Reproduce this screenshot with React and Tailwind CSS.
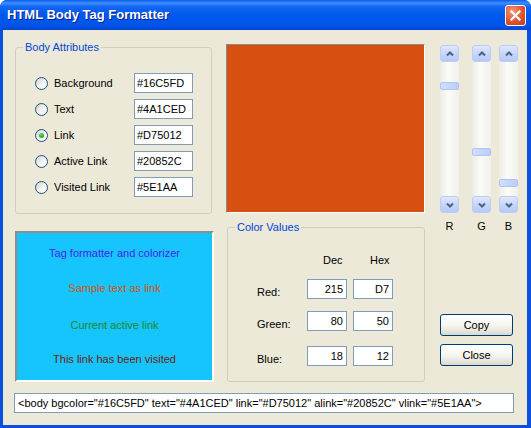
import React from 'react';

const attrs = [
  { label: 'Background', value: '#16C5FD' },
  { label: 'Text', value: '#4A1CED' },
  { label: 'Link', value: '#D75012', checked: true },
  { label: 'Active Link', value: '#20852C' },
  { label: 'Visited Link', value: '#5E1AA' },
];

const channels = [
  { name: 'Red:', dec: 215, hex: 'D7' },
  { name: 'Green:', dec: 80, hex: '50' },
  { name: 'Blue:', dec: 18, hex: '12' },
];

const Radio = ({ checked }) => (
  <div className="w-[13px] h-[13px] rounded-full border border-[#1C5180] bg-[linear-gradient(135deg,#D4D2C8,#F4F4F0_55%,#FFFFFF)] flex items-center justify-center shrink-0">
    {checked && (
      <div className="w-[5px] h-[5px] rounded-full bg-[radial-gradient(circle_at_40%_35%,#6EDB6E,#21A121_70%)]" />
    )}
  </div>
);

const ScrollBtn = ({ down }) => (
  <div className="h-[17px] w-full rounded-[3px] border border-[#BBCDF5] bg-[linear-gradient(to_bottom,#DFE8FD,#C6D6FC_50%,#B6CAF7)] flex items-center justify-center shrink-0">
    <svg width="8" height="6" viewBox="0 0 8 6">
      <polyline
        points={down ? '1,1.5 4,4.5 7,1.5' : '1,4.5 4,1.5 7,4.5'}
        fill="none"
        stroke="#4D6185"
        strokeWidth="2"
      />
    </svg>
  </div>
);

const Scroll = ({ value }) => {
  // thumb goes down as the value drops
  const top = Math.round(((255 - value) / 255) * 126);
  return (
    <div className="w-[19px] h-[168px] flex flex-col bg-[linear-gradient(to_right,#EDECE4,#FBFBF8_45%,#F1F0EA)]">
      <ScrollBtn />
      <div className="relative flex-1">
        <div
          className="absolute left-0 right-0 h-[8px] rounded-[2px] border border-[#B1C4F1] bg-[linear-gradient(to_right,#D2DEFD,#BBCEF8)]"
          style={{ top }}
        />
      </div>
      <ScrollBtn down />
    </div>
  );
};

const XpButton = ({ children, className = '' }) => (
  <div className={`w-[73px] h-[22px] rounded-[3px] border border-[#003C74] bg-[linear-gradient(to_bottom,#FFFFFF,#F4F4F0_55%,#DCD8CC)] flex items-center justify-center text-black ${className}`}>
    {children}
  </div>
);

const App = () => {
  return (
    <div className="w-[531px] h-[428px] flex flex-col bg-[#0A4FDD] rounded-t-[7px] overflow-hidden font-['Liberation_Sans',Arial,sans-serif] text-[11px] leading-[13px] text-black">
      {/* Title bar */}
      <div className="h-[30px] shrink-0 flex items-center justify-between pl-[7px] pr-[5px] bg-[linear-gradient(to_bottom,#0A5BEF_0%,#3D8FFB_10%,#1266F3_22%,#0058EE_50%,#0055E8_85%,#0046D3_100%)]">
        <span className="text-white font-bold text-[13px] leading-[16px] [text-shadow:1px_1px_0_#0A1E8C]">
          HTML Body Tag Formatter
        </span>
        <div className="w-[21px] h-[21px] rounded-[3px] border border-white bg-[radial-gradient(circle_at_35%_30%,#F29A7C,#E0532F_55%,#C5391A)] flex items-center justify-center">
          <svg width="11" height="11" viewBox="0 0 11 11">
            <path d="M1.5 1.5 L9.5 9.5 M9.5 1.5 L1.5 9.5" stroke="white" strokeWidth="2.2" strokeLinecap="square" />
          </svg>
        </div>
      </div>

      {/* Body */}
      <div className="flex-1 ml-[3px] mr-[4px] mb-[3px] bg-[#ECE9D8] flex flex-col">
        <div className="flex pl-[12px]">
          {/* Left column */}
          <div className="w-[199px] flex flex-col mt-[17px]">
            <div className="relative w-[197px] h-[167px] rounded-[3px] border border-[#D0D0BF] pt-[25px] pl-[19px]">
              <span className="absolute -top-[7px] left-[7px] px-[2px] bg-[#ECE9D8] text-[#0046D5]">
                Body Attributes
              </span>
              <div className="flex flex-col gap-[6px]">
                {attrs.map((a) => (
                  <div key={a.label} className="flex items-center h-[20px]">
                    <div className="w-[99px] flex items-center gap-[6px]">
                      <Radio checked={a.checked} />
                      <span>{a.label}</span>
                    </div>
                    <div className="w-[59px] h-[20px] border border-[#7F9DB9] bg-white px-[2px] flex items-center">
                      {a.value}
                    </div>
                  </div>
                ))}
              </div>
            </div>

            <div className="mt-[17px] w-[199px] h-[151px] border-2 border-t-[#8E8E8E] border-l-[#8E8E8E] border-b-white border-r-white bg-[#16C5FD] flex flex-col items-center pt-[14px]">
              <span className="text-[#4A1CED]">Tag formatter and colorizer</span>
              <span className="mt-[22px] text-[#D75012]">Sample text as link</span>
              <span className="mt-[24px] text-[#20852C]">Current active link</span>
              <span className="mt-[21px] text-[#701A0C]">This link has been visited</span>
            </div>
          </div>

          {/* Middle column */}
          <div className="w-[199px] ml-[12px] flex flex-col mt-[14px]">
            <div className="w-[199px] h-[169px] border border-t-[#8A8A8A] border-l-[#8A8A8A] border-b-white border-r-white bg-[#D75012]" />

            <div className="relative ml-[1px] mt-[14px] w-[198px] h-[155px] rounded-[3px] border border-[#D0D0BF] pt-[26px]">
              <span className="absolute -top-[7px] left-[7px] px-[2px] bg-[#ECE9D8] text-[#0046D5]">
                Color Values
              </span>
              <div className="flex pl-[95px]">
                <span className="w-[47px]">Dec</span>
                <span>Hex</span>
              </div>
              <div className="flex flex-col pl-[29px] mt-[12px]">
                {channels.map((c, i) => (
                  <div key={c.name} className={`flex items-start ${i === 1 ? 'mt-[12px]' : i === 2 ? 'mt-[15px]' : ''}`}>
                    <span className="w-[50px] mt-[7px]">{c.name}</span>
                    <div className="w-[40px] h-[20px] border border-[#7F9DB9] bg-white pr-[3px] flex items-center justify-end">
                      {c.dec}
                    </div>
                    <div className="ml-[6px] w-[40px] h-[20px] border border-[#7F9DB9] bg-white pr-[3px] flex items-center justify-end">
                      {c.hex}
                    </div>
                  </div>
                ))}
              </div>
            </div>
          </div>

          {/* Right column */}
          <div className="ml-[15px] flex flex-col mt-[15px]">
            <div className="flex">
              <div className="flex flex-col items-center">
                <Scroll value={215} />
                <span className="mt-[7px]">R</span>
              </div>
              <div className="flex flex-col items-center ml-[13px]">
                <Scroll value={80} />
                <span className="mt-[7px]">G</span>
              </div>
              <div className="flex flex-col items-center ml-[8px]">
                <Scroll value={18} />
                <span className="mt-[7px]">B</span>
              </div>
            </div>
            <XpButton className="mt-[81px]">Copy</XpButton>
            <XpButton className="mt-[8px]">Close</XpButton>
          </div>
        </div>

        <div className="ml-[11px] mt-[11px] w-[500px] h-[20px] border border-[#7F9DB9] bg-white pl-[3px] flex items-center">
          {'<body bgcolor="#16C5FD" text="#4A1CED" link="#D75012" alink="#20852C" vlink="#5E1AA">'}
        </div>
      </div>
    </div>
  );
};

export default App;
